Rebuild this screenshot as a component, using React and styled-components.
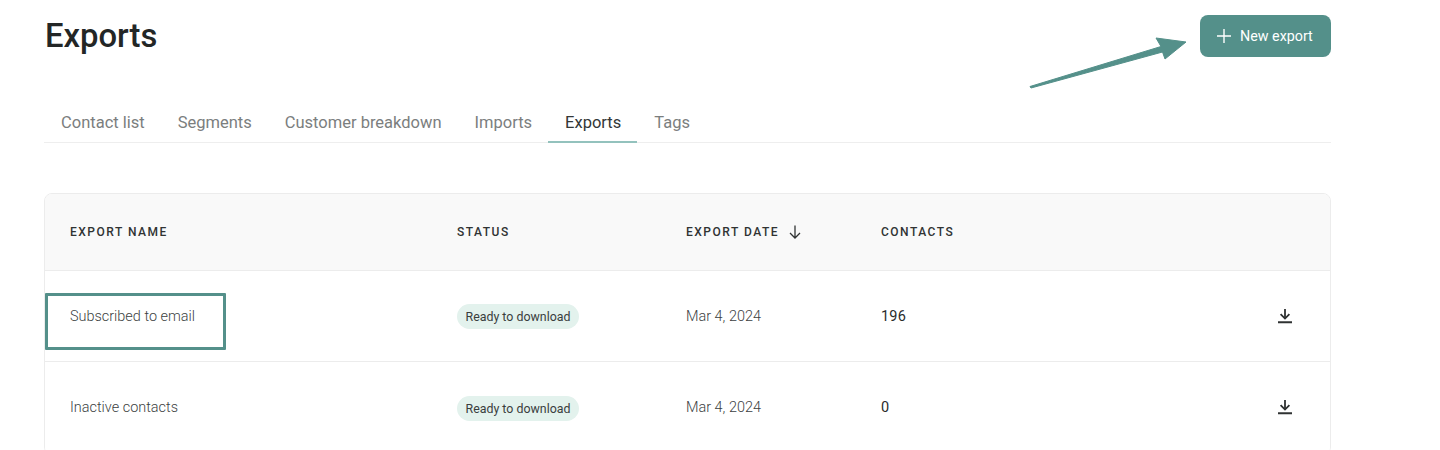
import React from "react";
import styled, { createGlobalStyle } from "styled-components";

const Global = createGlobalStyle`
  html, body { margin: 0; padding: 0; background: #fff; height: 450px; overflow: hidden; }
  body { font-family: Roboto, "Liberation Sans", sans-serif; color: #2a2c2c; }
`;
const Page = styled.div`
  position: relative;
  width: 1287px;
  margin-left: 44px;
  height: 450px;
  overflow: hidden;
`;
const Header = styled.header`
  display: flex;
  justify-content: space-between;
  align-items: flex-start;
  padding-top: 15px;
  height: 85px;
  box-sizing: content-box;
`;
const Title = styled.h1`
  margin: 0 0 0 1px;
  font-size: 32.8px;
  line-height: 42px;
  font-weight: 500;
  color: #232626;
`;
const PrimaryButton = styled.button`
  display: flex;
  align-items: center;
  gap: 8px;
  width: 131px;
  height: 42px;
  padding: 0 0 0 16px;
  background: #54908a;
  color: #fff;
  border: 0;
  border-radius: 8px;
  font: 400 14.3px Roboto, sans-serif;
`;
const Tabs = styled.nav`
  display: flex;
  height: 42px;
  border-bottom: 1px solid #eeeeee;
`;
const Tab = styled.div`
  padding: 12px 16px 0 17px;
  font-size: 16.5px;
  line-height: 22px;
  color: ${(p) => (p.$active ? "#333737" : "#7b7e7e")};
  border-bottom: ${(p) => (p.$active ? "2px solid #93c2bd" : "none")};
  height: ${(p) => (p.$active ? "29px" : "31px")};
  box-sizing: content-box;
`;
const Table = styled.section`
  margin-top: 50px;
  border: 1px solid #ececec;
  border-radius: 8px;
  overflow: hidden;
`;
const Row = styled.div`
  display: grid;
  grid-template-columns: 387px 229px 195px 1fr 64px;
  align-items: center;
  padding-left: 25px;
  height: ${(p) => p.$height}px;
  background: ${(p) => p.$bg || "#fff"};
  border-bottom: 1px solid #ececec;
  box-sizing: border-box;
`;
const HeadCell = styled.div`
  display: flex;
  align-items: center;
  gap: 9px;
  font-size: 12px;
  font-weight: 500;
  letter-spacing: 1.5px;
  text-transform: uppercase;
  color: #303333;
`;
const Cell = styled.div`
  font-size: ${(p) => (p.$strong ? "14.5px" : "14.45px")};
  color: ${(p) => (p.$strong ? "#2a2c2c" : "#3c3f3f")};
  font-weight: ${(p) => (p.$strong ? 400 : 300)};
  letter-spacing: ${(p) => (p.$strong ? "0.2px" : "0")};
`;
const StatusCell = styled.div`
  display: flex;
  margin-top: 1px;
`;
const Badge = styled.span`
  padding: 0 8.5px;
  height: 25px;
  line-height: 25px;
  border-radius: 13px;
  background: #e3f2ed;
  color: #3a3e3e;
  font-size: 12.4px;
`;
const IconCell = styled.div`
  display: flex;
  color: #2f3232;
  padding-left: 11px;
  margin-bottom: 1px;
`;
const Arrow = styled.svg`
  position: absolute;
  left: 981px;
  top: 30px;
`;
const Highlight = styled.div`
  position: absolute;
  left: 1px;
  top: 293px;
  width: 181px;
  height: 57px;
  box-sizing: border-box;
  border: 3px solid #54908a;
  border-radius: 1px;
`;

const DownloadIcon = () => (
  <svg width="16" height="16" viewBox="0 0 16 16" fill="none" stroke="currentColor">
    <path d="M8 1V10" strokeWidth="1.8" />
    <path d="M3.6 6.2L8 10.6L12.4 6.2" strokeWidth="1.8" />
    <path d="M1 14.2H15" strokeWidth="1.9" />
  </svg>
);
const rows = [
  { name: "Subscribed to email", contacts: "196", height: 91 },
  { name: "Inactive contacts", contacts: "0", height: 92 },
];
const tabs = ["Contact list", "Segments", "Customer breakdown", "Imports", "Exports", "Tags"];

export default function App() {
  return (
    <Page>
      <Global />
      <Header>
        <Title>Exports</Title>
        <PrimaryButton>
          <svg width="16" height="16" viewBox="0 0 16 16" stroke="#fff" strokeWidth="1.4">
            <path d="M8 1V15M1 8H15" />
          </svg>
          New export
        </PrimaryButton>
      </Header>
      <Tabs>
        {tabs.map((t) => (
          <Tab key={t} $active={t === "Exports"}>{t}</Tab>
        ))}
      </Tabs>
      <Table>
        <Row $height={77} $bg="#f9f9f9">
          <HeadCell>Export name</HeadCell>
          <HeadCell>Status</HeadCell>
          <HeadCell>
            Export date
            <svg width="14" height="16" viewBox="0 0 14 16" fill="none" stroke="#303333" strokeWidth="1.3">
              <path d="M7 1.5V14M2 9L7 14L12 9" />
            </svg>
          </HeadCell>
          <HeadCell>Contacts</HeadCell>
          <span />
        </Row>
        {rows.map((r) => (
          <Row key={r.name} $height={r.height}>
            <Cell>{r.name}</Cell>
            <StatusCell><Badge>Ready to download</Badge></StatusCell>
            <Cell>Mar 4, 2024</Cell>
            <Cell $strong>{r.contacts}</Cell>
            <IconCell><DownloadIcon /></IconCell>
          </Row>
        ))}
      </Table>
      <Arrow width="170" height="70" viewBox="0 0 170 70">
        <path
          d="M5 56.5L136 16.5L131 8L161 12L140 29L137.5 22L6 58Z"
          fill="#54908a"
          stroke="#54908a"
          strokeWidth="1"
          strokeLinejoin="round"
        />
      </Arrow>
      <Highlight />
    </Page>
  );
}
